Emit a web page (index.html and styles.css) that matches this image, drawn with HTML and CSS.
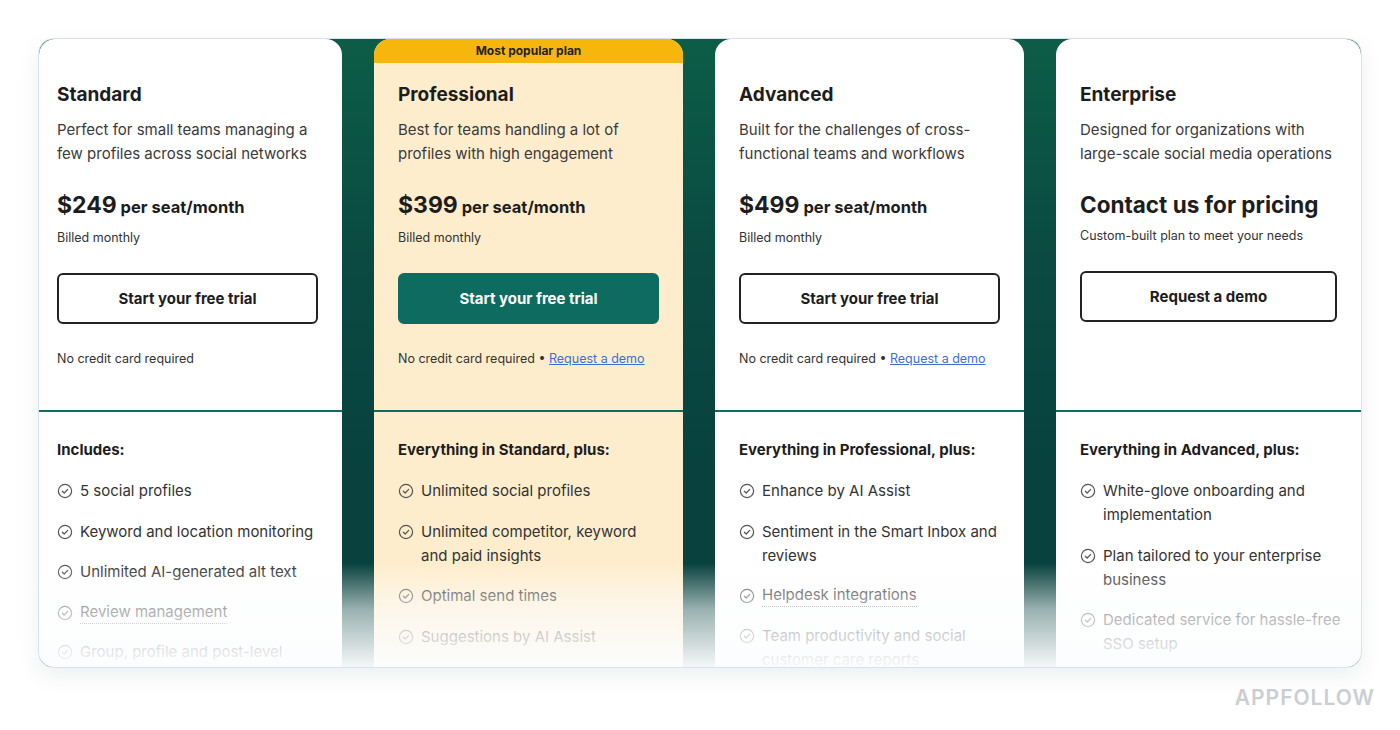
FILE: index.html
```html
<!DOCTYPE html>
<html lang="en">
<head>
  <meta charset="UTF-8">
  <title>Pricing plans</title>
  <link rel="stylesheet" href="styles.css">
</head>
<body>
  <div class="plans">
    <!-- Standard -->
    <div class="plan plan-first">
      <div class="plan-top">
        <h3>Standard</h3>
        <p class="desc">Perfect for small teams managing a<br>few profiles across social networks</p>
        <p class="price"><span class="amount">$249</span> per seat/month</p>
        <p class="billed">Billed monthly</p>
        <a class="btn" href="#">Start your free trial</a>
        <p class="note">No credit card required</p>
      </div>
      <div class="plan-bottom">
        <h4>Includes:</h4>
        <ul class="features">
          <li><svg class="check" viewBox="0 0 16 16"><circle cx="8" cy="8" r="6.6"/><path d="M5.3 8.2l1.9 1.8 3.5-3.6"/></svg><span>5 social profiles</span></li>
          <li><svg class="check" viewBox="0 0 16 16"><circle cx="8" cy="8" r="6.6"/><path d="M5.3 8.2l1.9 1.8 3.5-3.6"/></svg><span>Keyword and location monitoring</span></li>
          <li><svg class="check" viewBox="0 0 16 16"><circle cx="8" cy="8" r="6.6"/><path d="M5.3 8.2l1.9 1.8 3.5-3.6"/></svg><span>Unlimited AI-generated alt text</span></li>
          <li><svg class="check" viewBox="0 0 16 16"><circle cx="8" cy="8" r="6.6"/><path d="M5.3 8.2l1.9 1.8 3.5-3.6"/></svg><span class="dotted">Review management</span></li>
          <li><svg class="check" viewBox="0 0 16 16"><circle cx="8" cy="8" r="6.6"/><path d="M5.3 8.2l1.9 1.8 3.5-3.6"/></svg><span>Group, profile and post-level</span></li>
        </ul>
      </div>
    </div>

    <!-- Professional -->
    <div class="plan plan-popular">
      <div class="badge">Most popular plan</div>
      <div class="plan-top">
        <h3>Professional</h3>
        <p class="desc">Best for teams handling a lot of<br>profiles with high engagement</p>
        <p class="price"><span class="amount">$399</span> per seat/month</p>
        <p class="billed">Billed monthly</p>
        <a class="btn btn-filled" href="#">Start your free trial</a>
        <p class="note">No credit card required &bull; <a href="#">Request a demo</a></p>
      </div>
      <div class="plan-bottom">
        <h4>Everything in Standard, plus:</h4>
        <ul class="features">
          <li><svg class="check" viewBox="0 0 16 16"><circle cx="8" cy="8" r="6.6"/><path d="M5.3 8.2l1.9 1.8 3.5-3.6"/></svg><span>Unlimited social profiles</span></li>
          <li><svg class="check" viewBox="0 0 16 16"><circle cx="8" cy="8" r="6.6"/><path d="M5.3 8.2l1.9 1.8 3.5-3.6"/></svg><span>Unlimited competitor, keyword<br>and paid insights</span></li>
          <li><svg class="check" viewBox="0 0 16 16"><circle cx="8" cy="8" r="6.6"/><path d="M5.3 8.2l1.9 1.8 3.5-3.6"/></svg><span>Optimal send times</span></li>
          <li><svg class="check" viewBox="0 0 16 16"><circle cx="8" cy="8" r="6.6"/><path d="M5.3 8.2l1.9 1.8 3.5-3.6"/></svg><span>Suggestions by AI Assist</span></li>
        </ul>
      </div>
    </div>

    <!-- Advanced -->
    <div class="plan">
      <div class="plan-top">
        <h3>Advanced</h3>
        <p class="desc">Built for the challenges of cross-<br>functional teams and workflows</p>
        <p class="price"><span class="amount">$499</span> per seat/month</p>
        <p class="billed">Billed monthly</p>
        <a class="btn" href="#">Start your free trial</a>
        <p class="note">No credit card required &bull; <a href="#">Request a demo</a></p>
      </div>
      <div class="plan-bottom">
        <h4>Everything in Professional, plus:</h4>
        <ul class="features">
          <li><svg class="check" viewBox="0 0 16 16"><circle cx="8" cy="8" r="6.6"/><path d="M5.3 8.2l1.9 1.8 3.5-3.6"/></svg><span>Enhance by AI Assist</span></li>
          <li><svg class="check" viewBox="0 0 16 16"><circle cx="8" cy="8" r="6.6"/><path d="M5.3 8.2l1.9 1.8 3.5-3.6"/></svg><span>Sentiment in the Smart Inbox and<br>reviews</span></li>
          <li><svg class="check" viewBox="0 0 16 16"><circle cx="8" cy="8" r="6.6"/><path d="M5.3 8.2l1.9 1.8 3.5-3.6"/></svg><span class="dotted">Helpdesk integrations</span></li>
          <li><svg class="check" viewBox="0 0 16 16"><circle cx="8" cy="8" r="6.6"/><path d="M5.3 8.2l1.9 1.8 3.5-3.6"/></svg><span>Team productivity and social<br>customer care reports</span></li>
        </ul>
      </div>
    </div>

    <!-- Enterprise -->
    <div class="plan">
      <div class="plan-top">
        <h3>Enterprise</h3>
        <p class="desc">Designed for organizations with<br>large-scale social media operations</p>
        <p class="price price-contact">Contact us for pricing</p>
        <p class="billed">Custom-built plan to meet your needs</p>
        <a class="btn" href="#">Request a demo</a>
      </div>
      <div class="plan-bottom">
        <h4>Everything in Advanced, plus:</h4>
        <ul class="features">
          <li><svg class="check" viewBox="0 0 16 16"><circle cx="8" cy="8" r="6.6"/><path d="M5.3 8.2l1.9 1.8 3.5-3.6"/></svg><span>White-glove onboarding and<br>implementation</span></li>
          <li><svg class="check" viewBox="0 0 16 16"><circle cx="8" cy="8" r="6.6"/><path d="M5.3 8.2l1.9 1.8 3.5-3.6"/></svg><span>Plan tailored to your enterprise<br>business</span></li>
          <li><svg class="check" viewBox="0 0 16 16"><circle cx="8" cy="8" r="6.6"/><path d="M5.3 8.2l1.9 1.8 3.5-3.6"/></svg><span>Dedicated service for hassle-free<br>SSO setup</span></li>
        </ul>
      </div>
    </div>

    <div class="fade"></div>
  </div>

  <div class="watermark">APPFOLLOW</div>
</body>
</html>
```

FILE: styles.css
```css
body {
  margin: 0;
  padding: 38px 38px 0;
  background-color: #ffffff;
  font-family: 'Inter', 'Liberation Sans', sans-serif;
  color: #2b2b2b;
}

p {
  margin: 0;
}

.plans {
  position: relative;
  display: grid;
  grid-template-columns: 303px 309px 309px 305px;
  column-gap: 32px;
  width: 1324px;
  height: 630px;
  box-sizing: border-box;
  overflow: hidden;
  border: 1px solid #d8e2ee;
  border-radius: 16px;
  background: linear-gradient(180deg, #0c5d47 0%, #0a4a42 35%, #08413e 70%, #08413e 100%);
  box-shadow: 0 8px 22px rgba(30, 45, 70, 0.08);
}

.plan {
  display: flex;
  flex-direction: column;
  background-color: #ffffff;
  border-radius: 16px 16px 0 0;
}

.plan-popular {
  background-color: #fdedcd;
}

.badge {
  height: 24px;
  line-height: 24px;
  text-align: center;
  font-size: 12px;
  font-weight: 700;
  color: #1f1f1f;
  background-color: #f7b60c;
  border-radius: 16px 16px 0 0;
}

.plan-top {
  height: 373px;
  box-sizing: border-box;
  padding: 44px 24px 0 24px;
  border-bottom: 2px solid #136b5e;
}

.plan-first .plan-top,
.plan-first .plan-bottom {
  padding-left: 18px;
}

.plan-popular .plan-top {
  height: 349px;
  padding-top: 20px;
}

h3 {
  margin: 0;
  font-size: 19px;
  line-height: 24px;
  font-weight: 700;
  color: #1d1d1d;
}

.desc {
  margin-top: 11px;
  font-size: 15px;
  line-height: 24px;
  color: #3a3a3a;
}

.price {
  margin-top: 24px;
  font-size: 16.5px;
  line-height: 30px;
  font-weight: 700;
  color: #1d1d1d;
}

.price .amount {
  font-size: 23px;
}

.price-contact {
  font-size: 22.5px;
}

.billed {
  margin-top: 7px;
  font-size: 12.5px;
  line-height: 18px;
  color: #333;
}

.btn {
  display: block;
  margin-top: 26px;
  height: 51px;
  line-height: 47px;
  box-sizing: border-box;
  border: 2px solid #222;
  border-radius: 6px;
  text-align: center;
  font-size: 15px;
  font-weight: 700;
  color: #1d1d1d;
  text-decoration: none;
}

.btn-filled {
  background-color: #0e6b60;
  border-color: #0e6b60;
  color: #ffffff;
}

.note {
  margin-top: 26px;
  font-size: 12.5px;
  line-height: 18px;
  color: #333;
}

.note a {
  color: #3d6fd4;
  text-decoration: underline;
}

.plan-bottom {
  padding: 27px 24px 0 24px;
}

h4 {
  margin: 0;
  font-size: 15px;
  line-height: 22px;
  font-weight: 700;
  color: #1d1d1d;
}

.features {
  list-style: none;
  margin: 18px 0 0;
  padding: 0;
  display: flex;
  flex-direction: column;
  gap: 16.5px;
}

.features li {
  display: flex;
  align-items: flex-start;
  gap: 7px;
  font-size: 15px;
  line-height: 24px;
  color: #333;
  white-space: nowrap;
}

.check {
  flex: none;
  width: 16px;
  height: 16px;
  margin-top: 4px;
  fill: none;
  stroke: #555;
  stroke-width: 1.2;
  stroke-linecap: round;
  stroke-linejoin: round;
}

.dotted {
  border-bottom: 1px dotted #777;
  line-height: 22px;
}

.fade {
  position: absolute;
  left: 0;
  right: 0;
  bottom: 0;
  height: 104px;
  background: linear-gradient(180deg, rgba(252, 253, 254, 0) 0%, rgba(252, 253, 254, 0.6) 45%, rgba(252, 253, 254, 0.97) 100%);
  pointer-events: none;
}

.watermark {
  margin-top: 17px;
  margin-right: -13px;
  text-align: right;
  font-size: 21px;
  font-weight: 600;
  letter-spacing: 1px;
  color: #cbced3;
}
```
